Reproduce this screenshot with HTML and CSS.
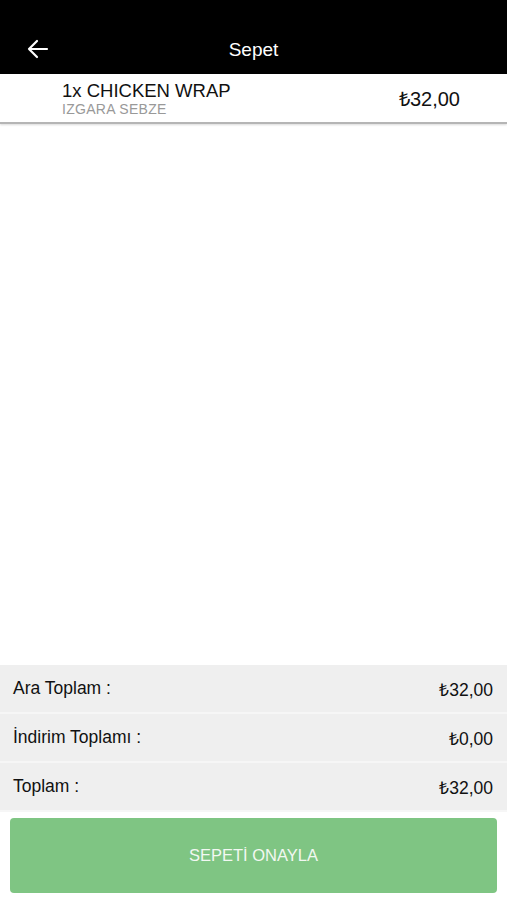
FILE: index.html
```html
<!DOCTYPE html>
<html lang="tr">
<head>
  <meta charset="UTF-8" />
  <meta name="viewport" content="width=device-width, initial-scale=1.0"/>
  <title>Sepet</title>
  <link rel="stylesheet" href="styles.css">
</head>
<body>
  <div class="screen">
    <div class="topbar">
      <button class="back" aria-label="Geri">
        <svg width="22" height="20" viewBox="0 0 22 20">
          <path d="M2 10 H20 M10 2 L2 10 L10 18" fill="none" stroke="#fff" stroke-width="2.2" stroke-linecap="round" stroke-linejoin="round"/>
        </svg>
      </button>
      <div class="title">Sepet</div>
    </div>

    <div class="item">
      <div class="item-info">
        <div class="item-name">1x CHICKEN WRAP</div>
        <div class="item-sub">IZGARA SEBZE</div>
      </div>
      <div class="item-price">₺32,00</div>
    </div>

    <div class="spacer"></div>

    <div class="summary">
      <div class="sum-row"><span>Ara Toplam :</span><span>₺32,00</span></div>
      <div class="sum-row"><span>İndirim Toplamı :</span><span>₺0,00</span></div>
      <div class="sum-row"><span>Toplam :</span><span>₺32,00</span></div>
    </div>

    <div class="actions">
      <button class="confirm">SEPETİ ONAYLA</button>
    </div>
  </div>
</body>
</html>
```

FILE: styles.css
```css
* {
  box-sizing: border-box;
}
body {
  margin: 0;
  font-family: "Liberation Sans", Arial, sans-serif;
  background: #fff;
}
.screen {
  height: 900px;
  display: flex;
  flex-direction: column;
}
.topbar {
  height: 74px;
  background: #000;
  color: #fff;
  display: flex;
  align-items: center;
  padding-top: 24px;
  position: relative;
}
.back {
  background: none;
  border: none;
  padding: 0;
  margin-left: 27px;
  width: 22px;
  height: 20px;
  display: flex;
}
.title {
  position: absolute;
  left: 0;
  right: 0;
  top: 25px;
  bottom: 0;
  display: flex;
  align-items: center;
  justify-content: center;
  font-size: 19px;
  pointer-events: none;
}
.item {
  height: 50px;
  display: flex;
  align-items: center;
  padding: 0 47px 0 62px;
  border-bottom: 2px solid #b5b5b5;
  box-shadow: 0 1px 2px rgba(0,0,0,0.15);
}
.item-info {
  flex: 1;
  padding-top: 1px;
}
.item-name {
  font-size: 18.5px;
  color: #111;
  line-height: 21px;
}
.item-sub {
  font-size: 14px;
  color: #999;
  line-height: 16px;
  letter-spacing: 0.3px;
}
.item-price {
  font-size: 20px;
  color: #111;
}
.spacer {
  flex: 1;
}
.summary {
  display: flex;
  flex-direction: column;
  gap: 2px;
  background: #f6f6f6;
  padding-bottom: 2px;
}
.sum-row {
  height: 47px;
  background: #efefef;
  display: flex;
  align-items: center;
  justify-content: space-between;
  padding: 0 14px 0 13px;
  font-size: 17.5px;
  color: #111;
}
.actions {
  padding: 6px 10px 7px;
}
.confirm {
  width: 100%;
  height: 75px;
  background: #7fc583;
  border: none;
  border-radius: 4px;
  color: #f2f8f2;
  font-family: "Liberation Sans", Arial, sans-serif;
  font-size: 16.5px;
}
```
